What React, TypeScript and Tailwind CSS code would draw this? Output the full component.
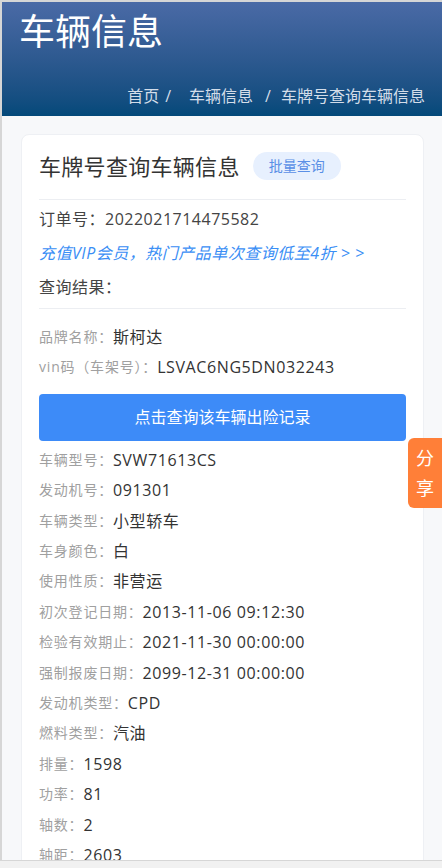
import React from 'react';

const rows: [string, string][] = [
  ['车辆型号：', 'SVW71613CS'],
  ['发动机号：', '091301'],
  ['车辆类型：', '小型轿车'],
  ['车身颜色：', '白'],
  ['使用性质：', '非营运'],
  ['初次登记日期：', '2013-11-06 09:12:30'],
  ['检验有效期止：', '2021-11-30 00:00:00'],
  ['强制报废日期：', '2099-12-31 00:00:00'],
  ['发动机类型：', 'CPD'],
  ['燃料类型：', '汽油'],
  ['排量：', '1598'],
  ['功率：', '81'],
  ['轴数：', '2'],
  ['轴距：', '2603'],
];

const InfoRow: React.FC<{ label: string; value: string }> = ({ label, value }) => (
  <div className="flex items-center leading-[30.4px] whitespace-nowrap">
    <span className="text-[14px] tracking-[0.8px] text-[#a0a0a0]">{label}</span>
    <span className="text-[16px] tracking-[0.6px] text-[#333]">{value}</span>
  </div>
);

export default function App() {
  return (
    <div
      className="relative w-[442px] h-[868px] overflow-hidden bg-[#f1f1f1]"
      style={{ fontFamily: '"Open Sans", "Noto Sans CJK SC", sans-serif' }}
    >
      <div className="h-[861px] overflow-hidden border-l-2 border-t-2 border-b border-[#d6d6d6] bg-[#f7f8fa]">
        {/* header */}
        <div className="h-[114px] bg-gradient-to-b from-[#4a6aa6] to-[#03497a] px-[17px] pt-[6px] flex flex-col">
          <h1 className="text-[36px] leading-[48px] text-white">车辆信息</h1>
          <div className="mt-auto mb-[9px] flex justify-end text-[16px] leading-[22px] text-[#d3dde9] whitespace-nowrap">
            <span>首页</span>
            <span className="ml-[6px]">/</span>
            <span className="ml-[18px]">车辆信息</span>
            <span className="ml-[12px]">/</span>
            <span className="ml-[10px]">车牌号查询车辆信息</span>
          </div>
        </div>

        {/* card */}
        <div className="ml-[19px] mr-[18px] mt-[18px] bg-white rounded-lg border border-[#eef0f4] px-[17px] pt-[17px]">
          <div className="flex items-center h-[28px]">
            <span className="text-[22px] tracking-[0.3px] text-[#333] leading-[28px]">车牌号查询车辆信息</span>
            <span className="ml-[13px] h-[28px] px-[16px] rounded-full bg-[#e7f0fe] text-[14px] text-[#5a8fe6] leading-[28px]">
              批量查询
            </span>
          </div>
          <div className="mt-[19px] border-t border-[#eceef2]" />
          <div className="text-[16px] tracking-[0.5px] text-[#444] leading-[34px] mt-[2px]">订单号：2022021714475582</div>
          <div className="text-[16px] tracking-[0.5px] text-[#3a8ef5] italic leading-[34px]">充值VIP会员，热门产品单次查询低至4折 &gt; &gt;</div>
          <div className="text-[16px] tracking-[0.5px] text-[#444] leading-[34px]">查询结果：</div>
          <div className="mt-[4px] border-t border-[#eceef2]" />

          <div className="mt-[13px]">
            <InfoRow label="品牌名称：" value="斯柯达" />
            <InfoRow label="vin码（车架号）：" value="LSVAC6NG5DN032243" />
            <button className="mt-[11px] mb-[4px] w-full h-[47px] rounded-[4px] bg-[#3d8bf8] text-white text-[16px]">
              点击查询该车辆出险记录
            </button>
            {rows.map(([l, v]) => (
              <InfoRow key={l} label={l} value={v} />
            ))}
          </div>
        </div>
      </div>

      {/* share */}
      <div className="absolute right-0 top-[438px] w-[34px] h-[70px] rounded-l-[6px] bg-[#ff7f38] flex flex-col items-center justify-center gap-[8px] text-white text-[18px] leading-[22px]">
        <span>分</span>
        <span>享</span>
      </div>
    </div>
  );
}
